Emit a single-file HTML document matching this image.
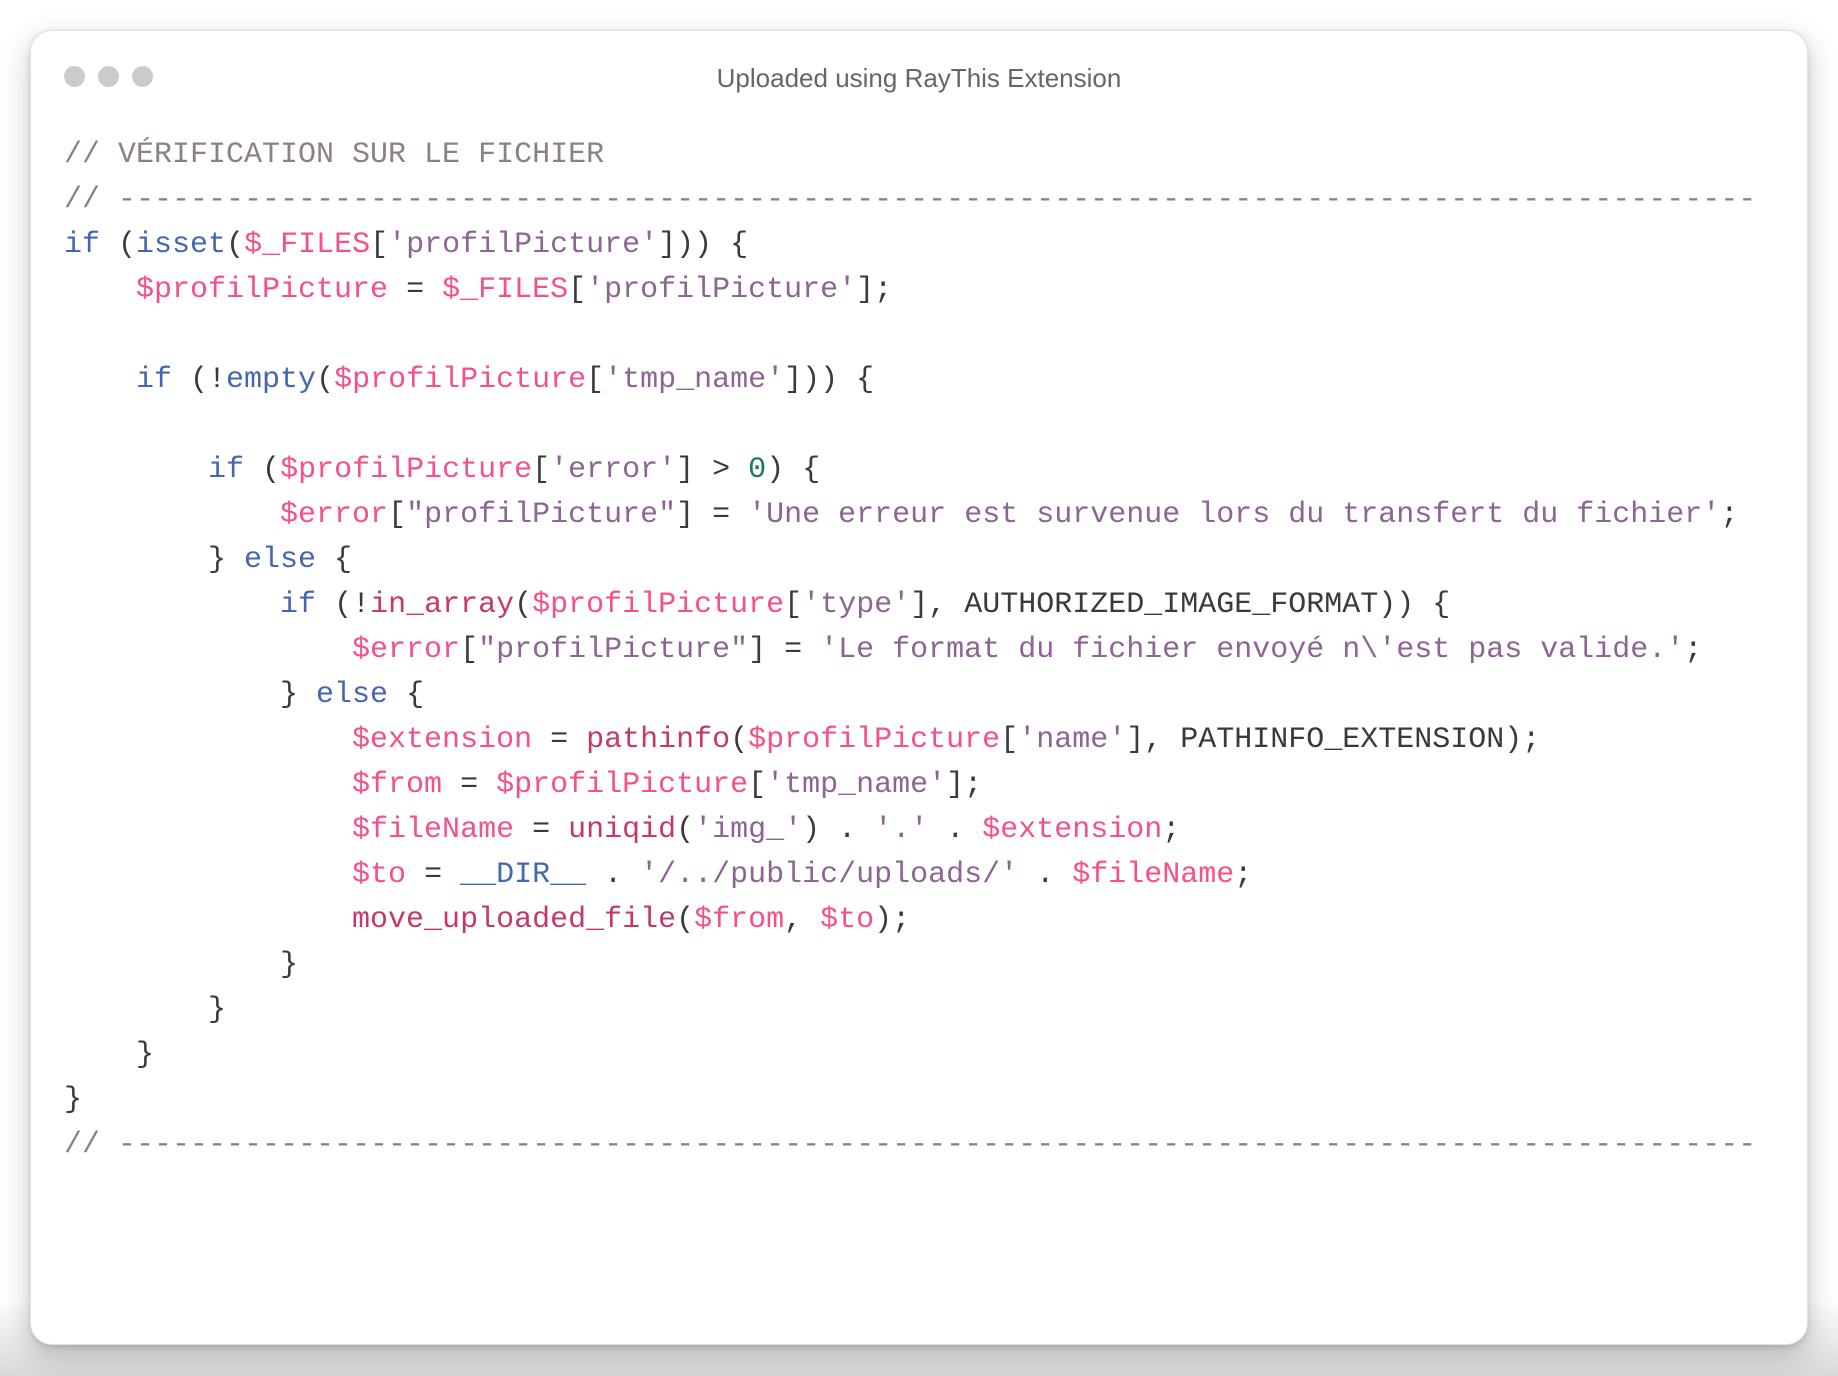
<!DOCTYPE html>
<html><head><meta charset="utf-8"><style>
html,body{margin:0;padding:0;width:1838px;height:1376px;background:#fff;overflow:hidden;}
body{background:linear-gradient(#fff 0,#fff 1300px,#d8d8d8 1376px);}
.card{position:absolute;left:30px;top:30px;width:1778px;height:1315px;background:#fff;border-radius:22px;border:1px solid #e2e2e2;box-shadow:0 10px 30px rgba(0,0,0,0.22),0 2px 6px rgba(0,0,0,0.12);box-sizing:border-box;}
.dot{position:absolute;top:66px;width:21px;height:21px;border-radius:50%;background:#cbcbcb;}
.title{position:absolute;left:0;width:1838px;top:63px;text-align:center;font:26px "Liberation Sans",sans-serif;color:#666;}
pre{position:absolute;left:64px;top:133px;margin:0;font-family:"Liberation Mono",monospace;font-size:30px;line-height:45px;color:#3a3a3a;}
.c{color:#8c8088}.k{color:#4566b0}.v{color:#f5508a}.s{color:#8e6494}.f{color:#c5386a}.n{color:#1a7a5a}
</style></head><body>
<div class="card"></div>
<div class="dot" style="left:64px"></div><div class="dot" style="left:98px"></div><div class="dot" style="left:132px"></div>
<div class="title">Uploaded using RayThis Extension</div>
<pre><span class="c">// VÉRIFICATION SUR LE FICHIER</span>
<span class="c">// -------------------------------------------------------------------------------------------</span>
<span class="k">if</span> (<span class="k">isset</span>(<span class="v">$_FILES</span>[<span class="s">'profilPicture'</span>])) {
    <span class="v">$profilPicture</span> = <span class="v">$_FILES</span>[<span class="s">'profilPicture'</span>];

    <span class="k">if</span> (!<span class="k">empty</span>(<span class="v">$profilPicture</span>[<span class="s">'tmp_name'</span>])) {

        <span class="k">if</span> (<span class="v">$profilPicture</span>[<span class="s">'error'</span>] &gt; <span class="n">0</span>) {
            <span class="v">$error</span>[<span class="s">"profilPicture"</span>] = <span class="s">'Une erreur est survenue lors du transfert du fichier'</span>;
        } <span class="k">else</span> {
            <span class="k">if</span> (!<span class="f">in_array</span>(<span class="v">$profilPicture</span>[<span class="s">'type'</span>], AUTHORIZED_IMAGE_FORMAT)) {
                <span class="v">$error</span>[<span class="s">"profilPicture"</span>] = <span class="s">'Le format du fichier envoyé n\'est pas valide.'</span>;
            } <span class="k">else</span> {
                <span class="v">$extension</span> = <span class="f">pathinfo</span>(<span class="v">$profilPicture</span>[<span class="s">'name'</span>], PATHINFO_EXTENSION);
                <span class="v">$from</span> = <span class="v">$profilPicture</span>[<span class="s">'tmp_name'</span>];
                <span class="v">$fileName</span> = <span class="f">uniqid</span>(<span class="s">'img_'</span>) . <span class="s">'.'</span> . <span class="v">$extension</span>;
                <span class="v">$to</span> = <span class="k">__DIR__</span> . <span class="s">'/../public/uploads/'</span> . <span class="v">$fileName</span>;
                <span class="f">move_uploaded_file</span>(<span class="v">$from</span>, <span class="v">$to</span>);
            }
        }
    }
}
<span class="c">// -------------------------------------------------------------------------------------------</span></pre>
</body></html>
